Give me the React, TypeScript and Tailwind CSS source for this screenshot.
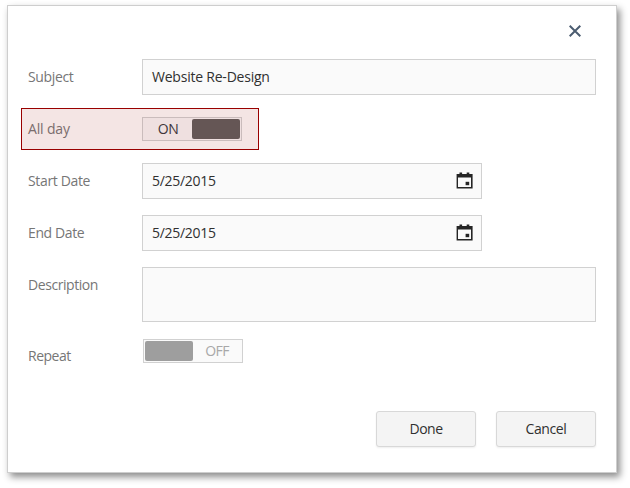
import type { ReactNode } from "react";

function CalendarIcon() {
  return (
    <svg width="17" height="18" viewBox="0 0 17 18" className="mr-2 block" fill="#252525">
      <path fillRule="evenodd" d="M3.5 0.6h2.6V2h4.6V0.6h2.6V2H16.6v14.6H0.6V2H3.5zM2 5.5V15h13V5.5z" />
      <rect x="9.6" y="9.8" width="3.6" height="3.4" />
    </svg>
  );
}

function Label({ children, className = "" }: { children: ReactNode; className?: string }) {
  return <div className={`w-[114px] shrink-0 whitespace-nowrap text-[#767676] ${className}`}>{children}</div>;
}

function DateField({ value }: { value: string }) {
  return (
    <div className="flex h-9 w-[340px] items-center justify-between border border-[#d1d1d1] bg-[#fafafa] pl-[9px]">
      <span className="tracking-[-0.3px]">{value}</span>
      <CalendarIcon />
    </div>
  );
}

export default function App() {
  return (
    <div className="h-[488px] w-[630px] overflow-hidden bg-white pl-[7px] pt-[5px] font-['Open_Sans','Noto_Sans',sans-serif] text-[14px] leading-5 text-[#303030]">
      <div className="h-[468px] w-[610px] border border-[#cecece] bg-white shadow-[3px_4px_7px_rgba(0,0,0,0.45)]">
        <div className="flex h-[53px] items-center justify-end pr-[35px]">
          <button aria-label="Close" className="block">
            <svg width="12" height="12" viewBox="0 0 12 12" className="mb-[3px] block" stroke="#4b5c70" strokeWidth="2" fill="none">
              <path d="M0.7 0.8 11.3 11.2M11.3 0.8 0.7 11.2" />
            </svg>
          </button>
        </div>

        <div className="flex items-center pl-5">
          <Label className="tracking-[-0.35px]">Subject</Label>
          <div className="flex h-9 w-[454px] items-center border border-[#d1d1d1] bg-[#fafafa] pl-[9px]">
            <span className="tracking-[-0.22px]">Website Re-Design</span>
          </div>
        </div>

        <div className="ml-[13px] mt-[13px] flex h-[42px] w-[238px] items-center border border-[#990000] bg-[#f4e5e4] pl-1.5">
          <Label className="!text-[#7b6d6d] tracking-[-0.15px]">All day</Label>
          <div className="flex h-6 w-[100px] items-center border border-[#cabcbc] bg-[#efe0e0] p-px">
            <span className="flex-1 text-center tracking-[-0.4px] text-[#40363a]">ON</span>
            <span className="h-5 w-12 rounded-[2px] bg-[#655655]" />
          </div>
        </div>

        <div className="mt-[13px] flex items-center pl-5">
          <Label className="tracking-[-0.35px]">Start Date</Label>
          <DateField value="5/25/2015" />
        </div>

        <div className="mt-4 flex items-center pl-5">
          <Label className="tracking-[-0.38px]">End Date</Label>
          <DateField value="5/25/2015" />
        </div>

        <div className="mt-4 flex pl-5">
          <Label className="pt-2 tracking-[-0.43px]">Description</Label>
          <div className="h-[55px] w-[454px] border border-[#d1d1d1] bg-[#fafafa]" />
        </div>

        <div className="mt-[17px] flex pl-5">
          <Label className="pt-[7px] tracking-[-0.5px]">Repeat</Label>
          <div className="ml-px flex h-6 w-[100px] items-center border border-[#d1d1d1] bg-[#fafafa] p-px">
            <span className="h-5 w-12 rounded-[2px] bg-[#9e9e9e]" />
            <span className="flex-1 text-center tracking-[-0.6px] text-[#a8a8a8]">OFF</span>
          </div>
        </div>

        <div className="mt-[45px] flex justify-end gap-5 pr-5">
          <button className="h-9 w-[100px] rounded-[3px] border border-[#d8d8d8] bg-[#f4f4f4] tracking-[-0.5px] shadow-[0_1px_2px_rgba(0,0,0,0.07)]">Done</button>
          <button className="h-9 w-[100px] rounded-[3px] border border-[#d8d8d8] bg-[#f4f4f4] tracking-[-0.4px] shadow-[0_1px_2px_rgba(0,0,0,0.07)]">Cancel</button>
        </div>
      </div>
    </div>
  );
}
